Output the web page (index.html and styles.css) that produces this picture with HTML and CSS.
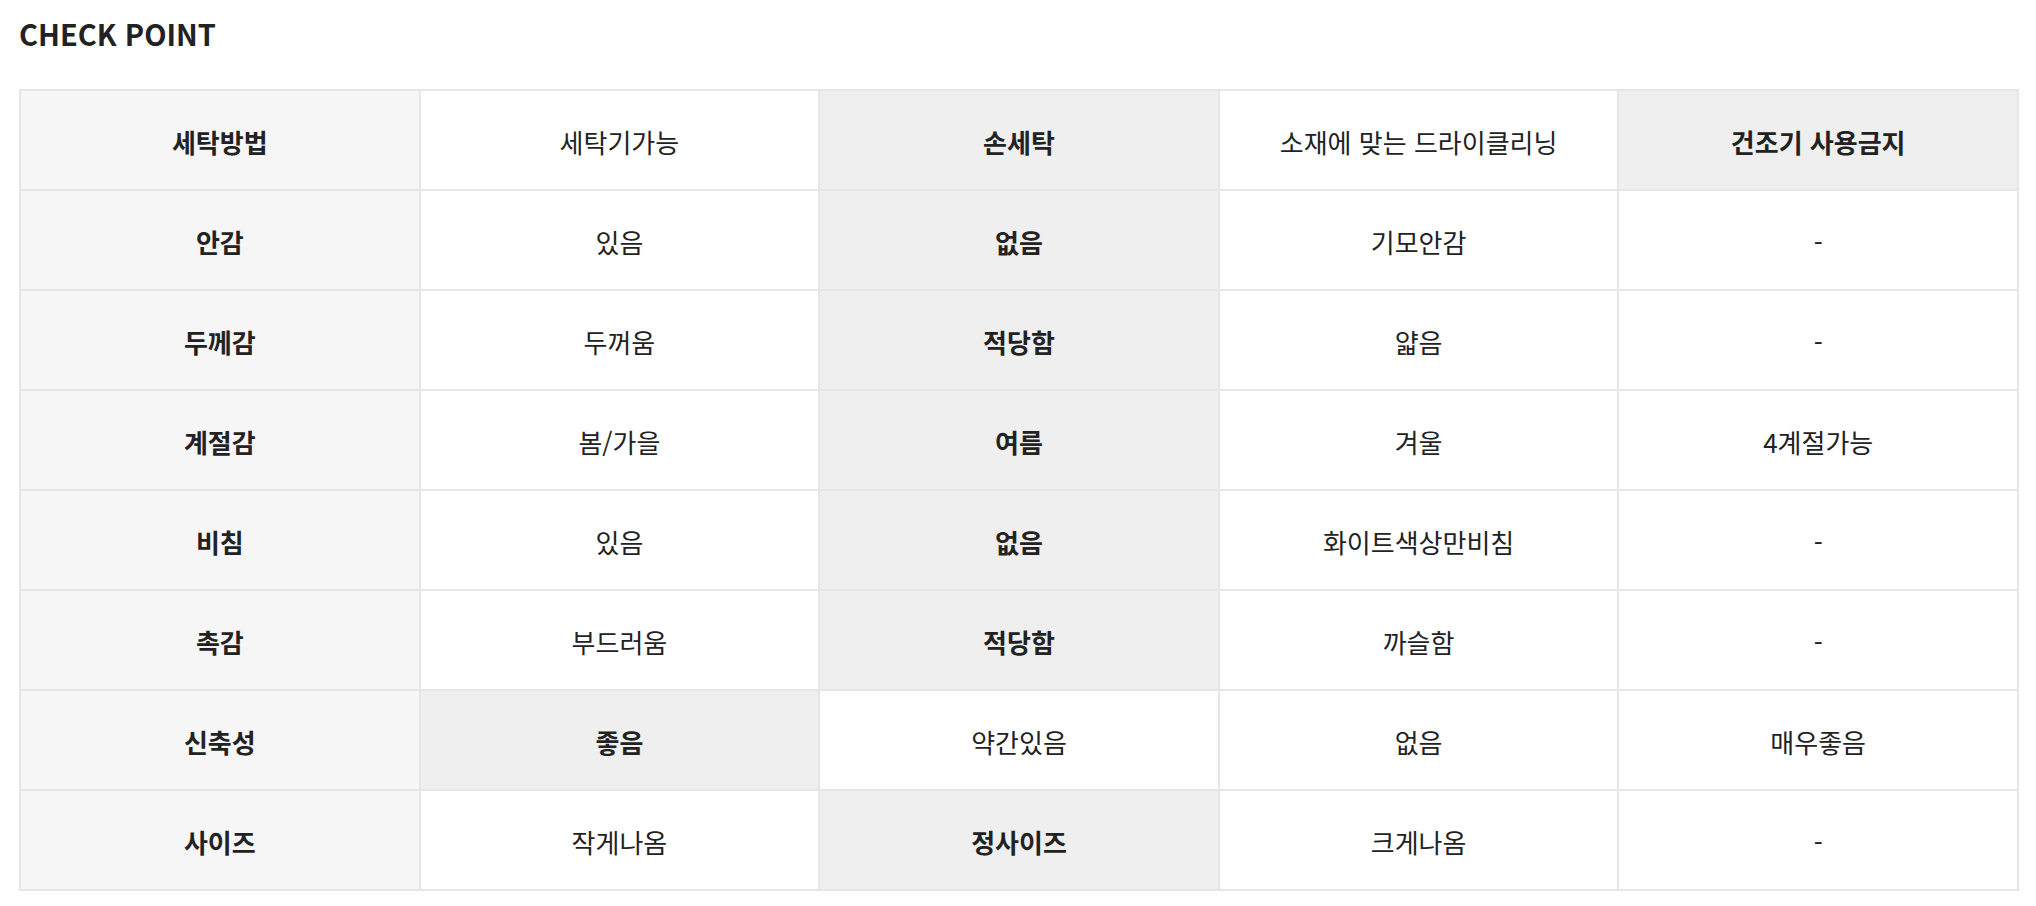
FILE: index.html
```html
<!DOCTYPE html>
<html lang="ko">
<head>
<meta charset="utf-8">
<link rel="stylesheet" href="styles.css">
</head>
<body>
<div class="wrap">
  <h2 class="title">CHECK POINT</h2>
  <table class="check">
    <colgroup><col><col><col><col><col></colgroup>
    <tbody>
      <tr><th>세탁방법</th><td>세탁기가능</td><td class="on">손세탁</td><td>소재에 맞는 드라이클리닝</td><td class="on">건조기 사용금지</td></tr>
      <tr><th>안감</th><td>있음</td><td class="on">없음</td><td>기모안감</td><td>-</td></tr>
      <tr><th>두께감</th><td>두꺼움</td><td class="on">적당함</td><td>얇음</td><td>-</td></tr>
      <tr><th>계절감</th><td>봄/가을</td><td class="on">여름</td><td>겨울</td><td>4계절가능</td></tr>
      <tr><th>비침</th><td>있음</td><td class="on">없음</td><td>화이트색상만비침</td><td>-</td></tr>
      <tr><th>촉감</th><td>부드러움</td><td class="on">적당함</td><td>까슬함</td><td>-</td></tr>
      <tr><th>신축성</th><td class="on">좋음</td><td>약간있음</td><td>없음</td><td>매우좋음</td></tr>
      <tr><th>사이즈</th><td>작게나옴</td><td class="on">정사이즈</td><td>크게나옴</td><td>-</td></tr>
    </tbody>
  </table>
</div>
</body>
</html>
```

FILE: styles.css
```css
html, body {
  margin: 0;
  background: #fff;
}
body {
  font-family: "Noto Sans CJK KR", "Noto Sans", sans-serif;
  color: #222;
}
.wrap {
  padding: 0 17px 0 19px;
}
.title {
  margin: 0;
  padding-top: 11px;
  height: 89px;
  box-sizing: border-box;
  font-size: 29px;
  line-height: 44px;
  font-weight: 700;
}
.check {
  width: 2000px;
  border-collapse: collapse;
  table-layout: fixed;
  border: 2px solid #e6e6e6;
}
.check th, .check td {
  height: 100px;
  padding: 4px 0 0;
  box-sizing: border-box;
  border: 2px solid #e6e6e6;
  text-align: center;
  vertical-align: middle;
  font-size: 26px;
  line-height: 36px;
  color: #222;
}
.check th {
  background: #f6f6f6;
  font-weight: 700;
}
.check td {
  font-weight: 400;
  background: #fff;
}
.check td.on {
  background: #efefef;
  font-weight: 700;
}
```
